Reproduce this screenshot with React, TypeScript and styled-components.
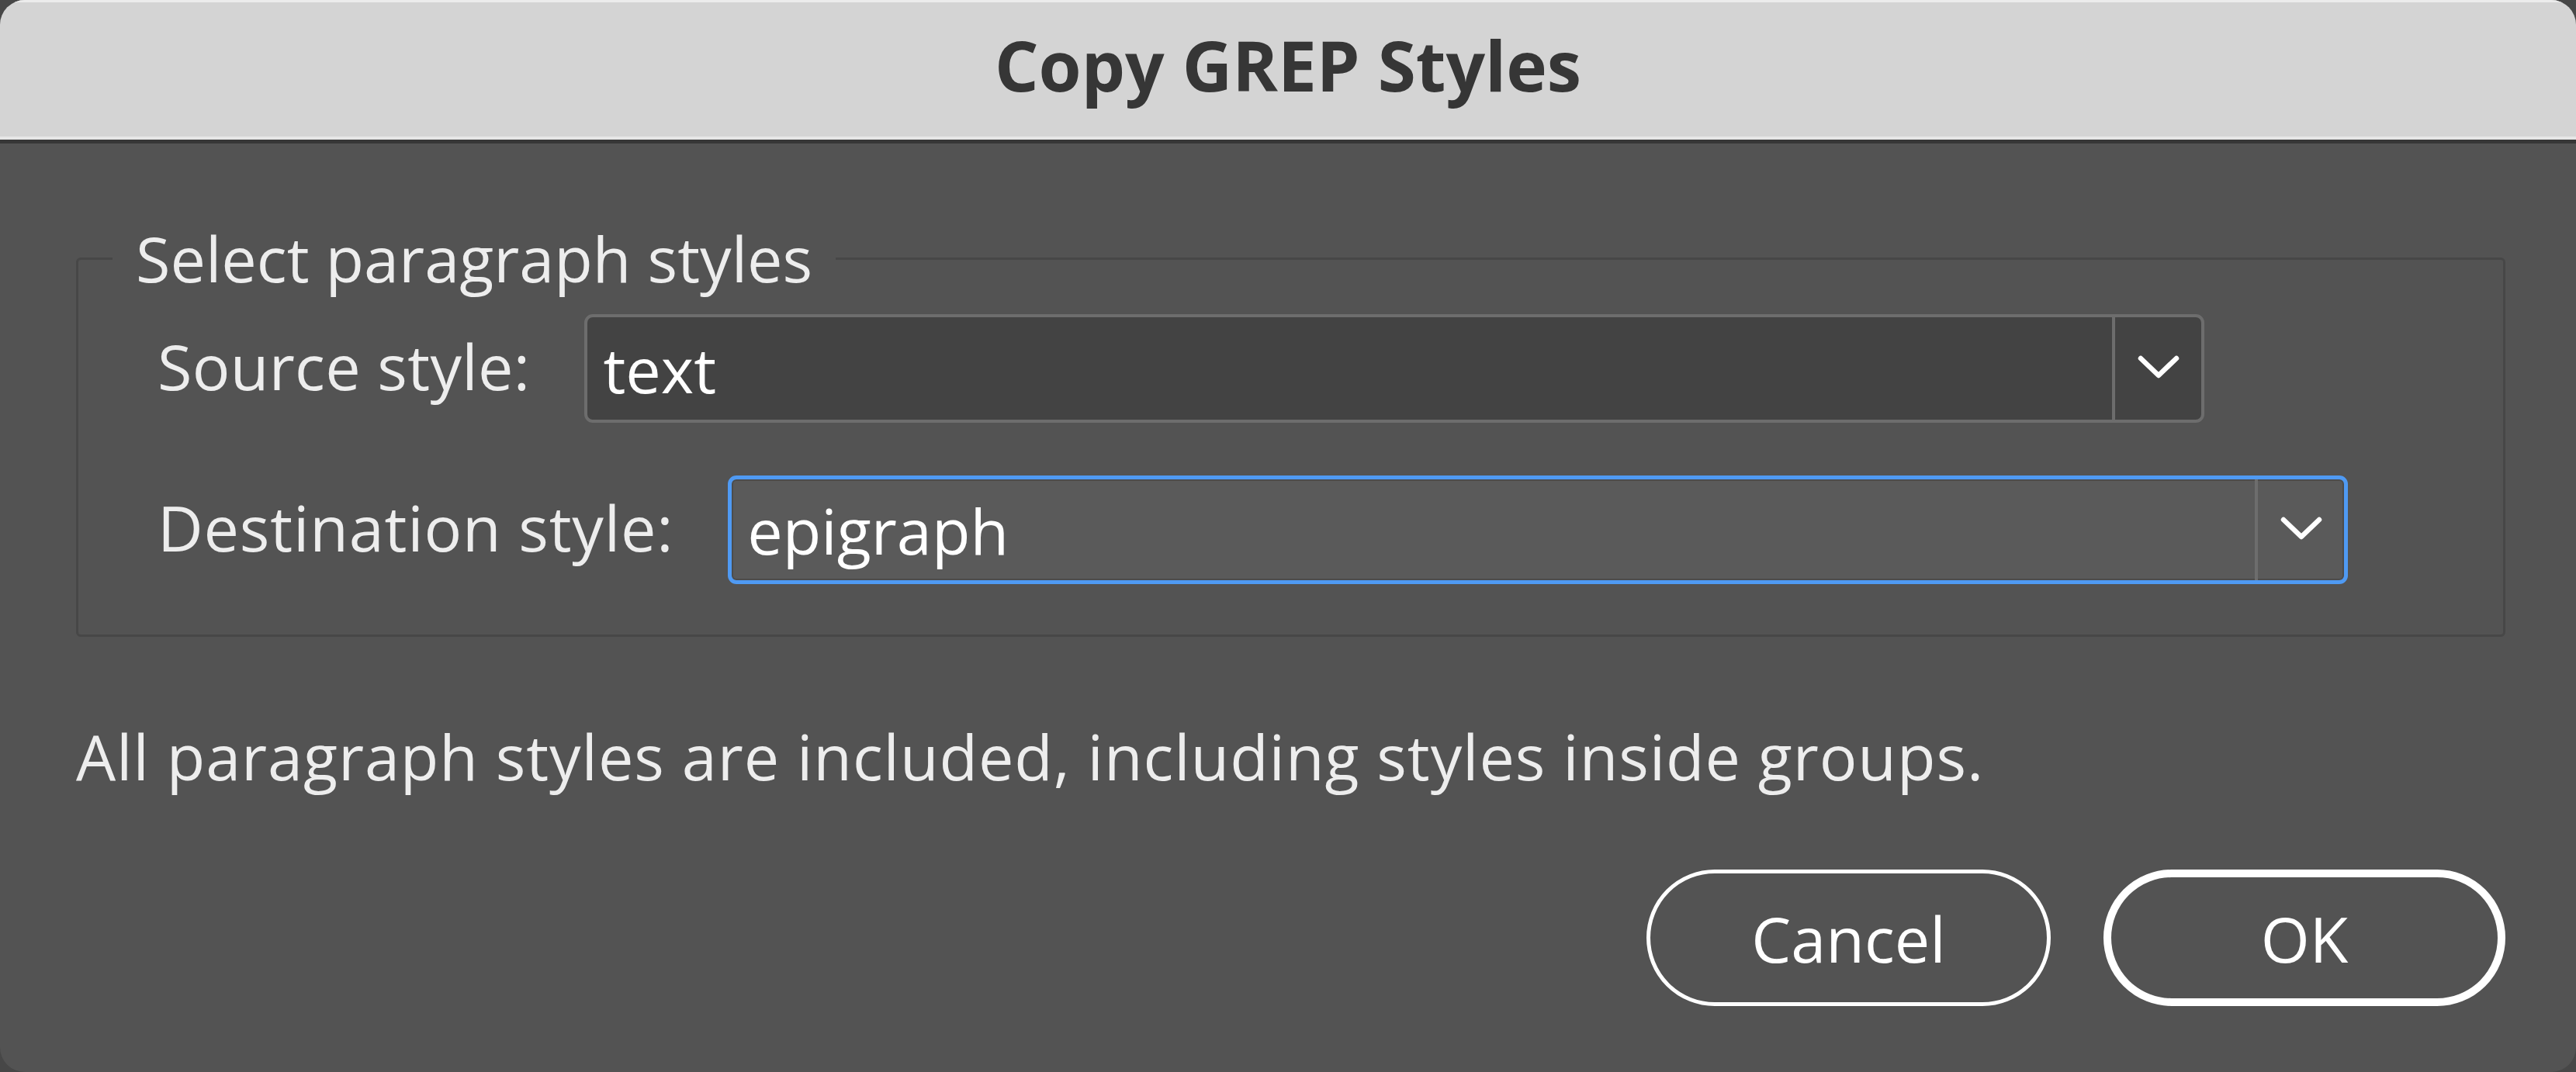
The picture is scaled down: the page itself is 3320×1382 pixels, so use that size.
import React from "react";
import styled, { createGlobalStyle } from "styled-components";

const Global = createGlobalStyle`
  html, body {
    margin: 0;
    padding: 0;
    background: #474747;
  }
  body {
    width: 3320px;
    height: 1382px;
    overflow: hidden;
    font-family: "Open Sans", "Noto Sans", sans-serif;
  }
  * { box-sizing: border-box; }
`;

const Window = styled.div`
  width: 3320px;
  height: 1382px;
  border-radius: 32px;
  overflow: hidden;
  background: #535353;
  display: flex;
  flex-direction: column;
`;

const TitleBar = styled.div`
  height: 185px;
  flex: 0 0 auto;
  background: #d4d4d4;
  border-bottom: 5px solid #373737;
  box-shadow: inset 0 -4px 0 #e6e6e6, inset 0 3px 0 #ececec;
  display: flex;
  align-items: center;
  justify-content: center;
  padding-bottom: 14px;
`;

const Title = styled.h1`
  margin: 0;
  font-family: "Open Sans", "Noto Sans", sans-serif;
  font-weight: 700;
  font-size: 89px;
  line-height: 1;
  color: #363636;
`;

const Body = styled.div`
  flex: 1 1 auto;
  display: flex;
  flex-direction: column;
  padding: 0 91px 0 98px;
`;

const Group = styled.fieldset`
  margin: 100px 0 0 0;
  padding: 24px 0 65px 102px;
  border: 3px solid #474747;
  border-radius: 6px;
  display: flex;
  flex-direction: column;
  gap: 68px;
  min-width: 0;
`;

const Legend = styled.legend`
  margin-left: -58px;
  padding: 0 30px;
  font-size: 81px;
  line-height: 96px;
  color: #ededed;
`;

const Row = styled.div`
  display: flex;
  align-items: center;
  gap: 70px;
`;

const Label = styled.span<{ $spacing: number }>`
  font-size: 81px;
  line-height: 1;
  color: #ededed;
  letter-spacing: ${(p) => p.$spacing}px;
  padding-bottom: 8px;
  white-space: nowrap;
`;

const Select = styled.div<{ $focused?: boolean }>`
  width: 2088px;
  height: 140px;
  flex: 0 0 auto;
  display: flex;
  align-items: stretch;
  border-radius: 11px;
  border: ${(p) => (p.$focused ? "5px solid #4f9af3" : "4px solid #6d6d6d")};
  background: ${(p) => (p.$focused ? "#5a5a5a" : "#434343")};
  box-shadow: ${(p) => (p.$focused ? "inset 0 0 0 2px #4c4c4c" : "none")};
`;

const Value = styled.div`
  flex: 1 1 auto;
  display: flex;
  align-items: center;
  padding-left: 20px;
  font-size: 81px;
  line-height: 1;
  font-weight: 500;
  color: #ffffff;
`;

const Arrow = styled.div`
  width: 115px;
  flex: 0 0 auto;
  border-left: 4px solid #6d6d6d;
  display: flex;
  align-items: center;
  justify-content: center;
  padding-bottom: 4px;
`;

const Note = styled.p`
  margin: 106px 0 0 0;
  font-size: 81px;
  line-height: 96px;
  letter-spacing: 0.9px;
  color: #ededed;
  white-space: nowrap;
`;

const Buttons = styled.div`
  margin-top: 98px;
  display: flex;
  justify-content: flex-end;
  gap: 68px;
`;

const Button = styled.button<{ $primary?: boolean; $w: number }>`
  width: ${(p) => p.$w}px;
  height: 176px;
  border-radius: 88px;
  background: transparent;
  border: ${(p) => (p.$primary ? "10px" : "5px")} solid #ffffff;
  color: #ffffff;
  font-family: "Open Sans", "Noto Sans", sans-serif;
  font-size: 81px;
  line-height: 1;
  font-weight: 500;
  padding: 0;
  display: flex;
  align-items: center;
  justify-content: center;
`;

const Chevron = () => (
  <svg width="54" height="30" viewBox="0 0 54 30" fill="none">
    <polyline
      points="4,4 27,26 50,4"
      stroke="#ffffff"
      strokeWidth="6.5"
      strokeLinecap="round"
      strokeLinejoin="round"
    />
  </svg>
);

export default function App() {
  return (
    <>
      <Global />
      <Window>
        <TitleBar>
          <Title>Copy GREP Styles</Title>
        </TitleBar>
        <Body>
          <Group>
            <Legend>Select paragraph styles</Legend>
            <Row>
              <Label $spacing={0.3}>Source style:</Label>
              <Select>
                <Value>text</Value>
                <Arrow>
                  <Chevron />
                </Arrow>
              </Select>
            </Row>
            <Row>
              <Label $spacing={0.8}>Destination style:</Label>
              <Select $focused>
                <Value>epigraph</Value>
                <Arrow>
                  <Chevron />
                </Arrow>
              </Select>
            </Row>
          </Group>
          <Note>All paragraph styles are included, including styles inside groups.</Note>
          <Buttons>
            <Button $w={521}>Cancel</Button>
            <Button $w={518} $primary>
              OK
            </Button>
          </Buttons>
        </Body>
      </Window>
    </>
  );
}
